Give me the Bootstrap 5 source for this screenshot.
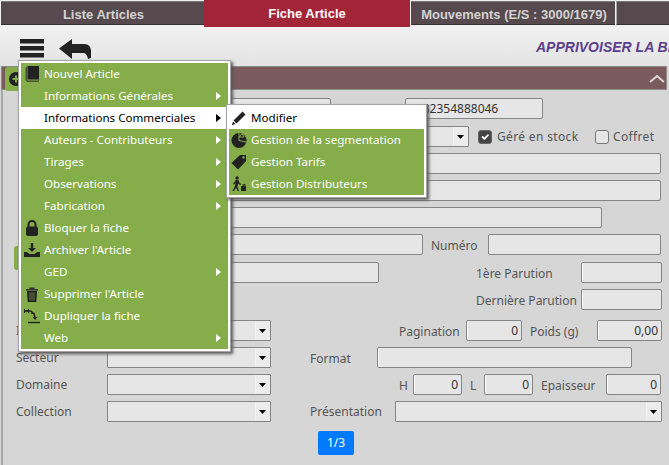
<!DOCTYPE html>
<html lang="fr">
<head>
<meta charset="utf-8">
<title>Fiche Article</title>
<link href="https://cdn.jsdelivr.net/npm/bootstrap@5.3.0/dist/css/bootstrap.min.css" rel="stylesheet">
<style>
html,body{height:465px;overflow:hidden}
body{background:#d6d6d6;font-family:"Noto Sans","Liberation Sans",sans-serif;font-size:12px;color:#555;position:relative}
.tabbar{height:27px;flex-wrap:nowrap;background:#f0f0f0}
.tabbar .nav-link{font:bold 13px "Liberation Sans",sans-serif;color:#d2d2d2;background:#574a4e;height:24px;margin-top:1px;padding:2px 0 0 2px;display:flex;align-items:center;justify-content:center;border-top:1px solid #777;border-bottom:1px solid #333;white-space:nowrap}
.tabbar .nav-link.active{color:#fff;background:#a32638;height:27px;margin-top:0;border:0;padding:0 0 1px}
.t1{width:203px;margin-left:1px}
.t2{width:206px;margin-right:1px}
.t3{width:204px}
.t4{flex:1 1 auto;margin-left:1px;border-left:1px solid #aaa;background:#574a4e;height:24px;margin-top:1px;border-top:1px solid #777;border-bottom:1px solid #333}
.toolbar{height:39px;background:linear-gradient(#f1f1f1,#e3e3e3);display:flex;align-items:flex-start;white-space:nowrap;overflow:hidden}
.burger{width:24px;height:19px;margin:12px 0 0 20px;flex:none}
.backarrow{width:32px;height:21px;margin:11px 0 0 15px;flex:none}
.booktitle{font:italic bold 14px "Liberation Sans",sans-serif;color:#5b3f8c;margin:12px 0 0 445px;flex:none}
.panelhead{height:24px;background:#7b5a5e;border:1px solid #8c8c8c;margin:0 2px 0 1px;display:flex;align-items:center;justify-content:flex-end;position:relative}
.chev{width:16px;height:9px;margin-right:1px}
.plusbtn{width:24px;height:24px;background:#85ad4a;border-radius:3px;position:absolute;left:3px;top:0;display:flex;align-items:center;padding-left:4px}
.formarea{border-left:2px solid #a8a8a8;margin-left:1px;padding-top:8px;height:376px}
.frow{display:flex;align-items:center;height:21px;margin-bottom:6px;padding-left:13px;white-space:nowrap}
.frow.gapmore{margin-bottom:7px}
.frow.gapbig{margin-bottom:10px}
.flabel{flex:none;line-height:21px}
.flabel.low{padding-top:2px}
.widetext{letter-spacing:.35px}
.form-control.fld,.form-select.fld{flex:none;height:21px;min-height:0;padding:0 3px;font-size:12px;line-height:19px;color:#333;background-color:#e6e6e6;border:1px solid #858585;border-radius:2px;box-shadow:none}
.form-control.num{text-align:right;box-shadow:inset 1px 0 0 #fff}
.form-select.fld{border-radius:1px;background-size:auto;background-position:right 0 center;background-image:url("data:image/svg+xml,%3Csvg xmlns='http://www.w3.org/2000/svg' width='15' height='19'%3E%3Crect width='15' height='19' fill='%23ececec'/%3E%3Cpath d='M0 0v19' stroke='%23f6f6f6'/%3E%3Cpath d='M4 8h7l-3.500 4z' fill='%23000'/%3E%3C/svg%3E")}
.form-check-input.chk{flex:none;width:14px;height:14px;margin:0;background-color:#e6e6e6;border:1px solid #777;border-radius:3px}
.form-check-input.chk.m9{margin-left:9px}
.form-check-input.chk:checked{background-color:#444;border-color:#666}
.tagbtn{flex:none;width:20px;height:24px;background:#85ad4a;border-radius:3px;margin:27px -18px 0 -2px}
.w14{width:14px}.w49{width:49px}.w55{width:55px}.w56{width:56px}.w57{width:57px}.w65{width:65px}.w67{width:67px}.w81{width:81px}.w85{width:85px}.w91{width:91px}.w98{width:98px}.w105{width:105px}.w138{width:138px}.w164{width:164px}.w173{width:173px}.w224{width:224px}.w255{width:255px}.w267{width:267px}.w272{width:272px}.w316{width:316px}.w362{width:362px}.w495{width:495px}.w554{width:554px}
.m4{margin-left:4px}.m5{margin-left:5px}.m8{margin-left:8px}.m39{margin-left:39px}.m74{margin-left:74px}.m97{margin-left:97px}.m128{margin-left:128px}.m369{margin-left:369px}
.rowfirst{margin-bottom:7px}
.pagerwrap{display:flex;justify-content:center;margin-top:9px}
.pagerwrap .btn{width:36px;height:24px;padding:0;font-size:12px;line-height:24px;background:#007bff;border:0;border-radius:2px;color:#fff}
.dropdown-menu.mainmenu,.dropdown-menu.submenu{margin:0;padding:2px;min-width:0;border:1px solid #a3a3a3;border-radius:0;background:#fff;box-shadow:2px 2px 3px #555;font-size:12px}
.dropdown-menu.mainmenu{top:60px;left:18px;width:213px;z-index:10}
.dropdown-menu.submenu{top:-3px;left:205px;width:201px;z-index:11}
.mitem{position:relative;background:#85ad4a}
.dropdown-item.mlink{display:flex;align-items:center;height:22px;padding:0 7px 0 3px;color:#fff;font-size:11.6px;white-space:nowrap;background:transparent}
.submenu .dropdown-item.mlink{padding-left:2px}
.dropdown-item.mlink.active{background:#fff;color:#000}
.mico{width:16px;height:16px;flex:none;margin-right:4px;display:block}
.msub{width:0;height:0;margin-left:auto;border-left:5px solid #fff;border-top:4px solid transparent;border-bottom:4px solid transparent}
.active .msub{border-left-color:#000}
</style>
</head>
<body>
<ul class="nav tabbar">
  <li class="nav-item t1"><a class="nav-link" href="#">Liste Articles</a></li>
  <li class="nav-item t2"><a class="nav-link active" href="#">Fiche Article</a></li>
  <li class="nav-item t3"><a class="nav-link" href="#">Mouvements (E/S : 3000/1679)</a></li>
  <li class="nav-item t4"></li>
</ul>
<div class="toolbar">
  <svg class="burger" viewBox="0 0 24 19"><path d="M0 0h24v4.500H0zM0 7h24v4.500H0zM0 14h24v4.500H0z" fill="#222"/></svg>
  <svg class="backarrow" viewBox="0 0 32 21"><path d="M0 10.500 13 1v5h12c5 0 7 3 7 7v7l-3 1c-1-5-3-6-5-6H13v6z" fill="#222"/></svg>
  <span class="booktitle">APPRIVOISER LA BÊTE</span>
</div>
<div class="panelhead">
  <span class="plusbtn"><svg width="14" height="14" viewBox="0 0 14 14"><circle cx="7" cy="7" r="7" fill="#222"/><path d="M3.500 7h7M7 3.500v7" stroke="#85ad4a" stroke-width="2"/></svg></span>
  <svg class="chev" viewBox="0 0 16 9"><path d="M1 8 8 2l7 6" fill="none" stroke="#d8d8d8" stroke-width="2"/></svg>
</div>
<form class="formarea">
  <div class="frow rowfirst"><span class="flabel w91"></span><input class="form-control fld w224"><input class="form-control fld w138 m74" value="9782354888046"></div>
  <div class="frow"><span class="flabel w91"></span><select class="form-select fld w362"><option></option></select><input class="form-check-input chk m9" type="checkbox" checked><span class="flabel widetext w98 m5">Géré en stock</span><input class="form-check-input chk" type="checkbox"><span class="flabel widetext m4">Coffret</span></div>
  <div class="frow"><span class="flabel w91"></span><input class="form-control fld w554"></div>
  <div class="frow"><span class="flabel w91"></span><input class="form-control fld w554"></div>
  <div class="frow"><span class="flabel w91"></span><input class="form-control fld w495"></div>
  <div class="frow gapmore"><span class="tagbtn"></span><span class="flabel w91"></span><input class="form-control fld w316"><span class="flabel low w57 m8">Numéro</span><input class="form-control fld w173"></div>
  <div class="frow"><span class="flabel w91"></span><input class="form-control fld w272"><span class="flabel low w105 m97">1ère Parution</span><input class="form-control fld num w81"></div>
  <div class="frow gapbig"><span class="flabel w91"></span><span class="flabel low w105 m369">Dernière Parution</span><input class="form-control fld num w81"></div>
  <div class="frow"><span class="flabel w91">I</span><select class="form-select fld w164"><option></option></select><span class="flabel low w67 m128">Pagination</span><input class="form-control fld num w56" value="0"><span class="flabel low w67 m8">Poids (g)</span><input class="form-control fld num w65" value="0,00"></div>
  <div class="frow"><span class="flabel w91">Secteur</span><select class="form-select fld w164"><option></option></select><span class="flabel low w67 m39">Format</span><input class="form-control fld num w255"></div>
  <div class="frow"><span class="flabel w91">Domaine</span><select class="form-select fld w164"><option></option></select><span class="flabel low w14 m128">H</span><input class="form-control fld num w49" value="0"><span class="flabel low w14 m8">L</span><input class="form-control fld num w49" value="0"><span class="flabel low w65 m8">Epaisseur</span><input class="form-control fld num w55" value="0"></div>
  <div class="frow"><span class="flabel w91">Collection</span><select class="form-select fld w164"><option></option></select><span class="flabel w85 m39">Présentation</span><select class="form-select fld w267"><option></option></select></div>
  <div class="pagerwrap"><button type="button" class="btn btn-primary">1/3</button></div>
</form>

<ul class="dropdown-menu show mainmenu list-unstyled">
  <li class="mitem"><a class="dropdown-item mlink" href="#"><svg class="mico" viewBox="0 0 16 16"><path d="M3.500 0H15v13.500H3.500z" fill="#222"/><path d="M3.500 0 1.500 2v12L3 16h12v-1.500H3.500L3 14V1z" fill="#44522f"/></svg>Nouvel Article</a></li>
  <li class="mitem"><a class="dropdown-item mlink" href="#"><span class="mico"></span>Informations Générales<span class="msub"></span></a></li>
  <li class="mitem"><a class="dropdown-item mlink active" href="#"><span class="mico"></span>Informations Commerciales<span class="msub"></span></a>
    <ul class="dropdown-menu show submenu list-unstyled">
      <li class="mitem"><a class="dropdown-item mlink active" href="#"><svg class="mico" viewBox="0 0 16 16"><path d="M11.500 1.500l3 3-9 9-3-3zM2 11.500l2.500 2.500-3.500 1z" fill="#222"/><path d="M1 15l1-1" stroke="#222"/></svg>Modifier</a></li>
      <li class="mitem"><a class="dropdown-item mlink" href="#"><svg class="mico" viewBox="0 0 16 16"><circle cx="8" cy="8.500" r="7.500" fill="#222"/><path d="M8 8.500V1M8 8.500l7.200 1.500M8 5l3-3.500 2 3.500z" fill="none" stroke="#85ad4a"/></svg>Gestion de la segmentation</a></li>
      <li class="mitem"><a class="dropdown-item mlink" href="#"><svg class="mico" viewBox="0 0 16 16"><path d="M9 1h6v6l-8 8.500L.5 9z" fill="#222"/><circle cx="12.500" cy="3.500" r="1.200" fill="#85ad4a"/></svg>Gestion Tarifs</a></li>
      <li class="mitem"><a class="dropdown-item mlink" href="#"><svg class="mico" viewBox="0 0 16 16"><circle cx="6" cy="2" r="1.700" fill="#222"/><path d="M5 4h2.500l1 3 1.500 1-.5 1-2.500-1.200L6.500 11l1.500 4H6.500l-1.500-3.500L3 15H1.500l2.500-5 .5-3-1.500 1.500L2 8z" fill="#222"/><path d="M10 10h5v5h-5z" fill="#222"/><path d="M11.500 8h3v2h-3z" fill="#3c4a28"/></svg>Gestion Distributeurs</a></li>
    </ul>
  </li>
  <li class="mitem"><a class="dropdown-item mlink" href="#"><span class="mico"></span>Auteurs - Contributeurs<span class="msub"></span></a></li>
  <li class="mitem"><a class="dropdown-item mlink" href="#"><span class="mico"></span>Tirages<span class="msub"></span></a></li>
  <li class="mitem"><a class="dropdown-item mlink" href="#"><span class="mico"></span>Observations<span class="msub"></span></a></li>
  <li class="mitem"><a class="dropdown-item mlink" href="#"><span class="mico"></span>Fabrication<span class="msub"></span></a></li>
  <li class="mitem"><a class="dropdown-item mlink" href="#"><svg class="mico" viewBox="0 0 16 16"><path d="M4.500 7V4.500a3.500 3.500 0 0 1 7 0V7" fill="none" stroke="#222" stroke-width="2"/><rect x="2" y="6.500" width="12" height="9.500" rx="2" fill="#222"/></svg>Bloquer la fiche</a></li>
  <li class="mitem"><a class="dropdown-item mlink" href="#"><svg class="mico" viewBox="0 0 16 16"><path d="M6.800 1h2.400v5H12L8 10 4 6h2.800z" fill="#222"/><path d="M0 10h3l2.500 2h5L13 10h3v5H0z" fill="#222"/></svg>Archiver l'Article</a></li>
  <li class="mitem"><a class="dropdown-item mlink" href="#"><span class="mico"></span>GED<span class="msub"></span></a></li>
  <li class="mitem"><a class="dropdown-item mlink" href="#"><svg class="mico" viewBox="0 0 16 16"><path d="M2 3h12v1.500H2zM5.500 1.500h5V3h-5z" fill="#333"/><path d="M3 5h10l-.7 11H3.700z" fill="#222"/><path d="M6 6.500v8M8 6.500v8M10 6.500v8" stroke="#6d7f48"/></svg>Supprimer l'Article</a></li>
  <li class="mitem"><a class="dropdown-item mlink" href="#"><svg class="mico" viewBox="0 0 16 16"><path d="M.5 1v4" stroke="#222"/><path d="M1 3h6l2 2" fill="none" stroke="#222" stroke-width="1.300"/><path d="M5 .5 2.500 3 5 5.500z" fill="#222"/><path d="M7 5l3 .5 1 4.500" fill="none" stroke="#222" stroke-width="1.500"/><path d="M8.500 9h5L11 12z" fill="#222"/><path d="M4 14.500h12" stroke="#222" stroke-width="1.400"/></svg>Dupliquer la fiche</a></li>
  <li class="mitem"><a class="dropdown-item mlink" href="#"><span class="mico"></span>Web<span class="msub"></span></a></li>
</ul>
<script src="https://cdn.jsdelivr.net/npm/bootstrap@5.3.0/dist/js/bootstrap.bundle.min.js"></script>
</body>
</html>
